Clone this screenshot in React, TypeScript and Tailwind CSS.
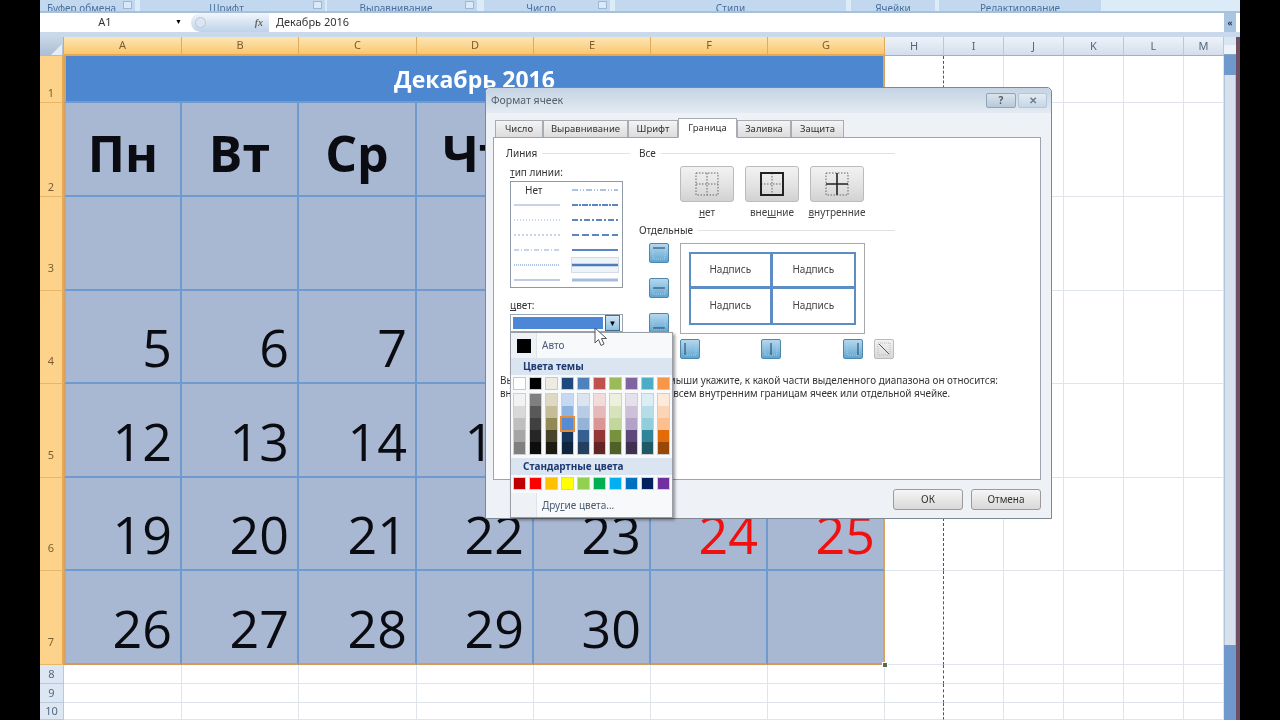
import React from "react";

const FONT = "font-['Noto_Sans','Liberation_Sans',sans-serif]";
const rowHeights = [47, 94, 94, 93, 94, 93, 94];
const extraCols = ["H", "I", "J", "K", "L", "M"];
const colLetters = ["A", "B", "C", "D", "E", "F", "G"];

const weeks: (number | string | null)[][] = [
  ["Пн", "Вт", "Ср", "Чт", "Пт", "Сб", "Вс"],
  [null, null, null, 1, 2, 3, 4],
  [5, 6, 7, 8, 9, 10, 11],
  [12, 13, 14, 15, 16, 17, 18],
  [19, 20, 21, 22, 23, 24, 25],
  [26, 27, 28, 29, 30, null, null],
];

const themeTop = ["#ffffff", "#000000", "#eeece1", "#1f497d", "#4f81bd", "#c0504d", "#9bbb59", "#8064a2", "#4bacc6", "#f79646"];
const shades = [
  ["#f2f2f2", "#d9d9d9", "#bfbfbf", "#a6a6a6", "#808080"],
  ["#7f7f7f", "#595959", "#404040", "#262626", "#0d0d0d"],
  ["#ddd9c3", "#c4bd97", "#938953", "#494429", "#1d1b10"],
  ["#c6d9f0", "#8db3e2", "#548dd4", "#17365d", "#0f243e"],
  ["#dbe5f1", "#b8cce4", "#95b3d7", "#366092", "#244061"],
  ["#f2dcdb", "#e5b9b7", "#d99694", "#953734", "#632423"],
  ["#ebf1dd", "#d7e3bc", "#c3d69b", "#76923c", "#4f6128"],
  ["#e5e0ec", "#ccc1d9", "#b2a2c7", "#5f497a", "#3f3151"],
  ["#dbeef3", "#b7dde8", "#92cddc", "#31859b", "#205867"],
  ["#fdeada", "#fbd5b5", "#fac08f", "#e36c09", "#974806"],
];
const standard = ["#c00000", "#ff0000", "#ffc000", "#ffff00", "#92d050", "#00b050", "#00b0f0", "#0070c0", "#002060", "#7030a0"];

const ribbonGroups = [
  { label: "Буфер обмена", w: "w-[95px]", ml: "ml-0", launcher: true },
  { label: "Шрифт", w: "w-[185px]", ml: "ml-[5px]", launcher: true },
  { label: "Выравнивание", w: "w-[150px]", ml: "ml-[2px]", launcher: true },
  { label: "Число", w: "w-[126px]", ml: "ml-[7px]", launcher: true },
  { label: "Стили", w: "w-[231px]", ml: "ml-[5px]", launcher: false },
  { label: "Ячейки", w: "w-[84px]", ml: "ml-[5px]", launcher: false },
  { label: "Редактирование", w: "w-[162px]", ml: "ml-[4px]", launcher: false },
];

function Ribbon() {
  return (
    <div className="flex h-[11px] overflow-hidden bg-[#dcebf8]">
      {ribbonGroups.map((g) => (
        <div key={g.label} className={`${g.w} ${g.ml} h-[11px] bg-[#c2d8ef] flex items-end text-[10px] leading-[10px] text-[#4a6f9c] overflow-hidden`}>
          <span className="relative top-[2px] flex-1 text-center">{g.label}</span>
          {g.launcher && <div className="w-[9px] h-[8px] mr-[3px] mb-[2px] bg-[#dbe8f6] border border-[#9db7d4]" />}
        </div>
      ))}
    </div>
  );
}

function FormulaBar() {
  return (
    <div className="flex h-[19px] bg-white items-center">
      <div className="w-[146px] text-[11px] text-[#333] flex items-center">
        <span className="w-[130px] text-center">A1</span>
        <span className="text-[7px] text-black ml-[5px]">▼</span>
      </div>
      <div className="ml-[5px] w-[78px] h-[19px] rounded-l-full bg-gradient-to-b from-[#f2f6fb] to-[#bed2e8] flex items-center justify-between pl-[4px] pr-[6px] text-[10px] italic font-bold text-[#666]">
        <div className="w-[11px] h-[11px] rounded-full bg-[#dbe6f2] border border-[#b5c7db]" />
        <span className="font-['Liberation_Serif',serif]">fx</span>
      </div>
      <div className="ml-[7px] flex-1 text-[11px] text-[#333]">Декабрь 2016</div>
      <div className="w-[12px] h-[19px] bg-[#a9c5e2] flex items-center justify-center text-[8px] text-[#334] font-bold">«</div>
      <div className="w-[4px]" />
    </div>
  );
}

function Sheet() {
  return (
    <div className="grid w-[1184px] h-[683px] grid-cols-[24px_118px_117px_118px_117px_117px_117px_117px_59px_60px_60px_60px_60px_40px] grid-rows-[19px_47px_94px_94px_93px_94px_93px_94px_19px_19px_17px] bg-white overflow-hidden">
      <div className="bg-gradient-to-b from-[#c9d6e6] to-[#a9bdd5] border-r border-[#9db1c9] flex items-end justify-end">
        <svg width="14" height="14" viewBox="0 0 14 14"><path d="M13 2V13H2Z" fill="#e6edf5" /></svg>
      </div>
      {colLetters.map((c) => (
        <div key={c} className="bg-gradient-to-b from-[#fce6b4] to-[#fbc66d] border-r border-[#e0ab5a] border-b-2 border-b-[#e7a84f] flex items-center justify-center text-[11px] text-[#7a6030]">{c}</div>
      ))}
      {extraCols.map((c) => (
        <div key={c} className="bg-gradient-to-b from-[#eef3fa] to-[#d3deec] border-r border-[#b9c8da] border-b border-b-[#9db1c9] flex items-center justify-center text-[11px] text-[#54677f]">{c}</div>
      ))}

      {rowHeights.map((_, r) => (
        <React.Fragment key={r}>
          <div className={`bg-[#fdd28a] border-b border-[#e9b566] border-r-2 border-r-[#e7a84f] flex items-end justify-center text-[11px] text-[#7a6030] ${r < 2 ? "pb-[1px]" : "pb-[14px]"}`}>{r + 1}</div>
          {r === 0 ? (
            <div className="col-span-7 bg-[#4d87d0] border-l-2 border-r-2 border-[#d9a35f] border-b-2 border-b-[#6f9ad0] flex items-center justify-center text-[23px] font-bold text-white font-['Open_Sans','Noto_Sans',sans-serif]">
              <span className="relative top-[1px]">Декабрь 2016</span>
            </div>
          ) : (
            colLetters.map((_, c) => {
              const v = weeks[r - 1][c];
              const isHead = r === 1;
              const red = c >= 5 && !isHead;
              return (
                <div
                  key={c}
                  className={`bg-[#a9b8d2] border-b-2 border-r-2 border-[#6f9ad0] flex font-['Open_Sans','Noto_Sans',sans-serif] ${c === 0 ? "border-l-2 border-l-[#d9a35f]" : ""} ${c === 6 ? "border-r-[#d9a35f]" : ""} ${r === 6 ? "border-b-[#d9975a]" : ""} ${isHead ? "items-center justify-center pt-[7px] text-[50px] font-bold text-[#0b0b12] leading-none" : `items-end justify-end pr-[8px] pb-[2px] text-[52px] font-medium leading-[66px] ${red ? "text-[#f01010]" : "text-[#0b0b12]"}`}`}
                >
                  {v}
                </div>
              );
            })
          )}
          {extraCols.map((c, i) => (
            <div key={c} className={`border-b border-[#dfe3ea] border-r ${i === 0 ? "border-r-[#555] [border-right-style:dashed]" : "border-r-[#dfe3ea]"}`} />
          ))}
        </React.Fragment>
      ))}

      {[8, 9, 10].map((n) => (
        <React.Fragment key={n}>
          <div className="bg-[#dde7f3] border-b border-r border-[#b9c8da] flex items-center justify-center text-[11px] text-[#54677f]">{n}</div>
          {colLetters.map((c) => (
            <div key={c} className="border-b border-r border-[#dfe3ea]" />
          ))}
          {extraCols.map((c, i) => (
            <div key={c} className={`border-b border-r border-b-[#dfe3ea] ${i === 0 ? "border-r-[#555] [border-right-style:dashed]" : "border-r-[#dfe3ea]"}`} />
          ))}
        </React.Fragment>
      ))}
    </div>
  );
}

function Scrollbar() {
  return (
    <div className="w-[12px] h-[683px] flex flex-col">
      <div className="h-[8px] bg-[#dbe6f3]" />
      <div className="h-[10px] bg-[#eef3f9] border-b border-[#8aa6c6]" />
      <div className="h-[20px] bg-[#6f98cc]" />
      <div className="h-[570px] bg-[#d7e1ee] border-x border-[#b3c3d8]" />
      <div className="flex-1 bg-[#6f98cc]" />
    </div>
  );
}

function Line({ w = 1, dash, color = "#5a86c4" }: { w?: number; dash?: string; color?: string }) {
  return (
    <svg width="46" height="8" viewBox="0 0 46 8">
      <line x1="0" y1="4" x2="46" y2="4" stroke={color} strokeWidth={w} strokeDasharray={dash} />
    </svg>
  );
}

function LineList() {
  const left: React.ReactNode[] = [
    <span className="text-[10px] leading-[10px] text-[#333] pl-[11px] block w-[46px]">Нет</span>,
    <Line color="#8fa9cf" />,
    <Line dash="1 2" color="#8fa9cf" />,
    <Line dash="2 2" color="#8fa9cf" />,
    <Line dash="5 2 1 2" color="#8fa9cf" />,
    <Line dash="1 1" color="#5a86c4" />,
    <Line w={1.5} color="#a5bddc" />,
  ];
  const right: React.ReactNode[] = [
    <Line dash="6 2 1 2 1 2" />,
    <Line w={2} dash="6 1 2 1" />,
    <Line w={2} dash="6 2 2 2" />,
    <Line w={2} dash="7 3" />,
    <Line w={2} />,
    <Line w={2.5} color="#4e7cba" />,
    <Line w={3} color="#a5bddc" />,
  ];
  return (
    <div className="w-[113px] h-[107px] border border-[#8e9aa6] ml-[4px] mt-[3px] bg-white pt-[1px] pl-[3px] flex flex-col">
      {left.map((l, i) => (
        <div key={i} className="flex h-[15px] items-center">
          <div className="w-[58px]">{l}</div>
          <div className={i === 5 ? "bg-[#eef3f9] outline outline-[#d5dce6] h-[14px] flex items-center" : ""}>{right[i]}</div>
        </div>
      ))}
    </div>
  );
}

function GroupTitle({ children, w }: { children: React.ReactNode; w: string }) {
  return (
    <div className={`flex items-center gap-[5px] h-[12px] text-[10px] leading-[12px] text-[#333] ${w}`}>
      <span>{children}</span>
      <div className="flex-1 h-px bg-[#dfe3e8]" />
    </div>
  );
}

function PresetBtn({ kind }: { kind: "none" | "outer" | "inner" }) {
  return (
    <div className="w-[54px] h-[36px] rounded-[3px] border border-[#bbbbbb] bg-gradient-to-b from-[#f2f2f2] via-[#e4e4e4] to-[#d2d2d2] flex items-center justify-center">
      <svg width="24" height="24" viewBox="0 0 24 24" fill="none">
        <g stroke="#666" strokeDasharray="1.5 1.5">
          {kind !== "outer" && <rect x="1" y="1" width="22" height="22" />}
          {kind !== "inner" && <path d="M12 1V23M1 12H23" />}
        </g>
        {kind === "outer" && <rect x="1" y="1" width="22" height="22" stroke="#222" strokeWidth="2" />}
        {kind === "inner" && <path d="M12 1V23M1 12H23" stroke="#222" strokeWidth="1.6" />}
      </svg>
    </div>
  );
}

function SmallBtn({ path, gray }: { path: string; gray?: boolean }) {
  return (
    <div className={`w-[20px] h-[20px] rounded-[2px] flex items-center justify-center ${gray ? "border border-[#bbb] bg-gradient-to-b from-[#f2f2f2] to-[#d8d8d8]" : "border border-[#4f86ab] bg-gradient-to-b from-[#b4d8ee] to-[#5ea6d0]"}`}>
      <svg width="14" height="14" viewBox="0 0 14 14" fill="none">
        <rect x="1" y="1" width="12" height="12" stroke={gray ? "#bbb" : "#a9cde6"} strokeDasharray="1 1" />
        <path d={path} stroke={gray ? "#555" : "#1f3f60"} />
      </svg>
    </div>
  );
}

function Preview() {
  return (
    <div className="w-[185px] h-[91px] border border-[#a8a8a8] bg-white p-[8px] flex">
      <div className="w-full h-full grid grid-cols-2 grid-rows-2 border-[2px] border-[#5c8ec4] text-[10px] text-[#444]">
        <div className="border-r-[3px] border-b-[3px] border-[#5c8ec4] flex items-center justify-center">Надпись</div>
        <div className="border-b-[3px] border-[#5c8ec4] flex items-center justify-center">Надпись</div>
        <div className="border-r-[3px] border-[#5c8ec4] flex items-center justify-center">Надпись</div>
        <div className="flex items-center justify-center">Надпись</div>
      </div>
    </div>
  );
}

function Dialog() {
  const tabs = [
    ["Число", "w-[48px]"],
    ["Выравнивание", "w-[85px]"],
    ["Шрифт", "w-[50px]"],
    ["Граница", "w-[59px]"],
    ["Заливка", "w-[54px]"],
    ["Защита", "w-[53px]"],
  ];
  return (
    <div className={`absolute left-[485px] top-[87px] w-[567px] h-[432px] rounded-t-[5px] border border-[#7d8894] bg-[#eef2f7] flex flex-col px-[7px] ${FONT}`}>
      <div className="h-[25px] -mx-[7px] px-[5px] rounded-t-[5px] bg-gradient-to-b from-[#c4d3e3] to-[#e4ebf3] flex items-center">
        <span className="text-[10.5px] text-[#55606c] flex-1">Формат ячеек</span>
        <div className="w-[30px] h-[15px] rounded-[2px] border border-[#8ea4bb] bg-gradient-to-b from-[#dbe4ed] to-[#b9c8d8] flex items-center justify-center text-[10px] font-bold text-[#4d5c6c]">?</div>
        <div className="ml-[2px] mr-[-1px] w-[29px] h-[15px] rounded-[2px] border border-[#b4c5d7] bg-gradient-to-b from-[#e4ecf4] to-[#c6d5e5] flex items-center justify-center text-[10px] font-bold text-[#6b7a8a]">✕</div>
      </div>
      <div className="flex h-[24px] items-end pl-[2px] relative z-10">
        {tabs.map(([t, w]) => (
          <div
            key={t}
            className={`${w} flex items-center justify-center text-[9.5px] leading-none text-[#333] border-t border-x border-[#a6adb6] ${t === "Граница" ? "h-[20px] bg-white border-b border-b-white -mb-px" : "h-[17px] bg-gradient-to-b from-[#f4f4f4] to-[#dcdcdc]"}`}
          >
            {t}
          </div>
        ))}
      </div>
      <div className="w-[548px] h-[343px] border border-[#9da4ad] bg-white pl-[12px] pt-[9px]">
        <div className="flex">
          <div className="w-[133px] shrink-0">
            <GroupTitle w="w-[124px]">Линия</GroupTitle>
            <div className="mt-[7px] ml-[4px] h-[12px] text-[10px] leading-[12px] text-[#333]"><u>т</u>ип линии:</div>
            <LineList />
            <div className="mt-[11px] ml-[4px] h-[12px] text-[10px] leading-[12px] text-[#333]"><u>ц</u>вет:</div>
            <div className="mt-[3px] ml-[4px] w-[113px] h-[18px] border border-[#9aa8b6] bg-white flex items-center p-[2px] gap-[2px]">
              <div className="flex-1 h-full bg-[#4c86d6]" />
              <div className="w-[15px] h-[16px] border border-[#3f6f92] bg-gradient-to-b from-[#cfe6f5] to-[#8cc0df] flex items-center justify-center text-[8px] leading-none text-black">▼</div>
            </div>
          </div>
          <div className="w-[256px] shrink-0">
            <GroupTitle w="w-[256px]">Все</GroupTitle>
            <div className="flex ml-[41px] mt-[7px] gap-[11px]">
              <div className="w-[54px] flex flex-col items-center"><PresetBtn kind="none" /><div className="mt-[4px] text-[10px] leading-[12px] text-[#444]"><u>н</u>ет</div></div>
              <div className="w-[54px] flex flex-col items-center"><PresetBtn kind="outer" /><div className="mt-[4px] text-[10px] leading-[12px] text-[#444]">вне<u>ш</u>ние</div></div>
              <div className="w-[54px] flex flex-col items-center"><PresetBtn kind="inner" /><div className="mt-[4px] text-[10px] leading-[12px] text-[#444] whitespace-nowrap"><u>в</u>нутренние</div></div>
            </div>
            <div className="mt-[6px]"><GroupTitle w="w-[256px]">Отдельные</GroupTitle></div>
            <div className="flex mt-[7px]">
              <div className="w-[41px] pl-[10px] flex flex-col gap-[15px]">
                <SmallBtn path="M1 2H13" />
                <SmallBtn path="M1 7H13" />
                <SmallBtn path="M1 12H13" />
              </div>
              <Preview />
            </div>
            <div className="flex mt-[5px] ml-[41px]">
              <SmallBtn path="M2 1V13" />
              <div className="ml-[61px]"><SmallBtn path="M7 1V13" /></div>
              <div className="ml-[62px]"><SmallBtn path="M12 1V13" /></div>
              <div className="ml-[11px]"><SmallBtn gray path="M2 2L12 12" /></div>
            </div>
          </div>
        </div>
        <div className="mt-[15px] -ml-[6px] text-[9.9px] leading-[13px] text-[#333] whitespace-nowrap">
          <div>Выберите тип линии и с помощью мыши укажите, к какой части выделенного диапазона он относится:</div>
          <div>внешней границе всего диапазона, всем внутренним границам ячеек или отдельной ячейке.</div>
        </div>
      </div>
      <div className="flex justify-end gap-[8px] mt-[9px] w-[548px]">
        <div className="w-[70px] h-[21px] rounded-[3px] border border-[#9a9a9a] bg-gradient-to-b from-[#f6f6f6] to-[#d8d8d8] flex items-center justify-center text-[10px] text-[#333]">ОК</div>
        <div className="w-[70px] h-[21px] rounded-[3px] border border-[#9a9a9a] bg-gradient-to-b from-[#f6f6f6] to-[#d8d8d8] flex items-center justify-center text-[10px] text-[#333]">Отмена</div>
      </div>
    </div>
  );
}

function Palette() {
  return (
    <div className={`absolute left-[510px] top-[332px] w-[163px] h-[186px] bg-[#f7f9fb] border border-[#9a9fa6] shadow-[2px_2px_3px_rgba(0,0,0,0.4)] flex flex-col ${FONT}`}>
      <div className="h-[25px] flex items-center">
        <div className="w-[26px] h-full bg-[#eef1f5] border-r border-[#dfe3e8] flex items-center justify-center">
          <div className="w-[14px] h-[14px] bg-black" />
        </div>
        <span className="ml-[5px] text-[10px] text-[#4a5a72]">Авто</span>
      </div>
      <div className="h-[17px] bg-[#dbe5f1] flex items-center pl-[12px] text-[10px] font-bold text-[#1f3a72]">Цвета темы</div>
      <div className="flex pl-[3px] gap-[5px] mt-[3px]">
        {themeTop.map((c) => (
          <div key={c} className="w-[11px] h-[11px] outline outline-[#c8c8c8]" style={{ backgroundColor: c }} />
        ))}
      </div>
      <div className="flex pl-[3px] gap-[5px] mt-[5px]">
        {shades.map((col, i) => (
          <div key={i} className="w-[11px] flex flex-col outline outline-[#cfcfcf]">
            {col.map((c, j) => (
              <div key={j} className={`h-[12px] relative ${i === 3 && j === 2 ? "outline-2 outline-[#e88a3c] z-10" : ""}`} style={{ backgroundColor: c }} />
            ))}
          </div>
        ))}
      </div>
      <div className="h-[17px] mt-[4px] bg-[#dbe5f1] flex items-center pl-[12px] text-[10px] font-bold text-[#1f3a72]">Стандартные цвета</div>
      <div className="flex pl-[3px] gap-[5px] mt-[3px]">
        {standard.map((c) => (
          <div key={c} className="w-[11px] h-[11px] outline outline-[#d0d0d0]" style={{ backgroundColor: c }} />
        ))}
      </div>
      <div className="flex-1 mt-[4px] flex">
        <div className="w-[26px] bg-[#eef1f5] border-r border-[#dfe3e8]" />
        <div className="ml-[5px] flex items-center text-[10px] text-[#4a5a72]">Дру<u>г</u>ие цвета...</div>
      </div>
    </div>
  );
}

export default function App() {
  return (
    <div className="relative w-[1280px] h-[720px] bg-black overflow-hidden blur-[0.4px] font-['Noto_Sans','Liberation_Sans',sans-serif]">
      <div className="ml-[40px] w-[1200px] h-[720px] flex flex-col">
        <Ribbon />
        <div className="h-[2px] bg-[#a8c0da]" />
        <FormulaBar />
        <div className="h-[5px] bg-[#c9d9eb]" />
        <div className="flex">
          <Sheet />
          <Scrollbar />
          <div className="w-[4px] bg-[#6e4f63]" />
        </div>
      </div>
      <div className="absolute left-[882px] top-[662px] w-[6px] h-[6px] bg-[#5a6a50] border border-white" />
      <Dialog />
      <Palette />
      <svg className="absolute left-[594px] top-[327px]" width="16" height="20" viewBox="0 0 16 20">
        <path d="M1 1V16L4.5 12.5L7 18.5L10 17L7.5 11.5H12.5Z" fill="#fff" stroke="#555" strokeWidth="1" />
      </svg>
    </div>
  );
}
